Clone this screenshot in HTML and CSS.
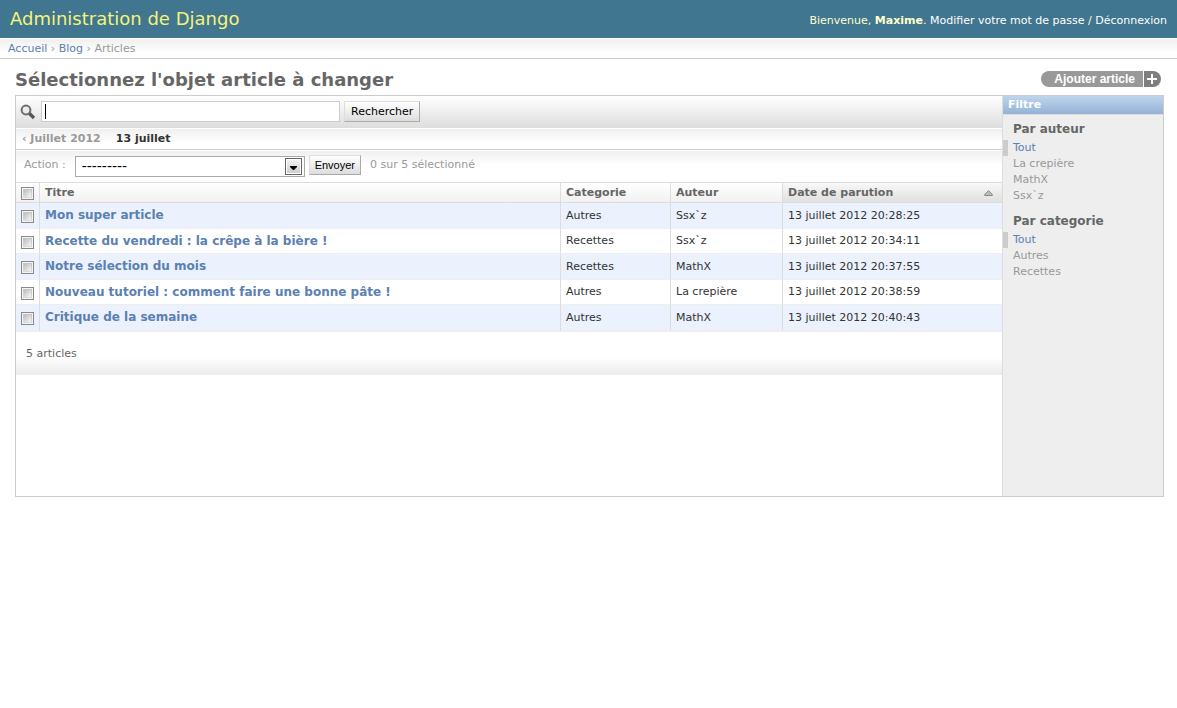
FILE: index.html
```html
<!DOCTYPE html>
<html lang="fr">
<head>
<meta charset="utf-8">
<title>Sélectionnez l'objet article à changer</title>
<link rel="stylesheet" href="styles.css">
</head>
<body>
<header class="header">
  <div class="brand">Administration de Django</div>
  <div class="user-tools">Bienvenue, <strong>Maxime</strong>. <a href="#">Modifier votre mot de passe</a> / <a href="#">Déconnexion</a></div>
</header>
<nav class="breadcrumbs"><a href="#">Accueil</a> › <a href="#">Blog</a> › Articles</nav>
<main class="content">
  <div class="title-row">
    <h1>Sélectionnez l'objet article à changer</h1>
    <a class="add-link" href="#"><span class="add-label">Ajouter article</span><span class="add-icon"><svg width="10" height="10" viewBox="0 0 10 10" aria-hidden="true"><path d="M5 0v10M0 5h10" stroke="#fff" stroke-width="2"/></svg></span></a>
  </div>
  <div class="module">
    <div class="results">
      <form class="search">
        <label for="q"><svg width="16" height="16" viewBox="0 0 16 16" role="img" aria-label="Recherche"><path d="M9 9l5 5" stroke="#555" stroke-width="3.200"/><circle cx="6" cy="6" r="4.400" fill="#ececec" stroke="#6c6c6c" stroke-width="2"/></svg></label>
        <input class="search-input" id="q" type="text">
        <button class="button" type="button">Rechercher</button>
      </form>
      <nav class="dates"><a class="back" href="#">‹ Juillet 2012</a><span class="day">13 juillet</span></nav>
      <form class="actions">
        <label for="action">Action :</label>
        <span class="select-wrap"><select id="action"><option>---------</option></select><span class="arrow"><svg width="7" height="4" viewBox="0 0 7 4" aria-hidden="true"><path d="M0 0h7v1L4 4H3L0 1z"/></svg></span></span>
        <button class="button send" type="button">Envoyer</button>
        <span class="counter">0 sur 5 sélectionné</span>
      </form>
      <table>
        <colgroup><col class="col-check"><col><col class="col-category"><col class="col-author"><col class="col-date"></colgroup>
        <thead>
          <tr><th><input type="checkbox" aria-label="Tout sélectionner"></th><th>Titre</th><th>Categorie</th><th>Auteur</th><th class="sorted"><span class="sort">Date de parution<svg width="9" height="6" viewBox="0 0 9 6" aria-hidden="true"><path d="M4.500 0.700L8.300 4.500v1H0.700v-1z" fill="#bbb" stroke="#888"/></svg></span></th></tr>
        </thead>
        <tbody>
          <tr><td><input type="checkbox" aria-label="Mon super article"></td><td><a href="#">Mon super article</a></td><td>Autres</td><td>Ssx`z</td><td>13 juillet 2012 20:28:25</td></tr>
          <tr><td><input type="checkbox" aria-label="Recette du vendredi"></td><td><a href="#">Recette du vendredi : la crêpe à la bière !</a></td><td>Recettes</td><td>Ssx`z</td><td>13 juillet 2012 20:34:11</td></tr>
          <tr><td><input type="checkbox" aria-label="Notre sélection du mois"></td><td><a href="#">Notre sélection du mois</a></td><td>Recettes</td><td>MathX</td><td>13 juillet 2012 20:37:55</td></tr>
          <tr><td><input type="checkbox" aria-label="Nouveau tutoriel"></td><td><a href="#">Nouveau tutoriel : comment faire une bonne pâte !</a></td><td>Autres</td><td>La crepière</td><td>13 juillet 2012 20:38:59</td></tr>
          <tr><td><input type="checkbox" aria-label="Critique de la semaine"></td><td><a href="#">Critique de la semaine</a></td><td>Autres</td><td>MathX</td><td>13 juillet 2012 20:40:43</td></tr>
        </tbody>
      </table>
      <p class="paginator">5 articles</p>
    </div>
    <aside class="filter">
      <h2>Filtre</h2>
      <h3>Par auteur</h3>
      <ul>
        <li class="selected"><a href="#">Tout</a></li>
        <li><a href="#">La crepière</a></li>
        <li><a href="#">MathX</a></li>
        <li><a href="#">Ssx`z</a></li>
      </ul>
      <h3>Par categorie</h3>
      <ul>
        <li class="selected"><a href="#">Tout</a></li>
        <li><a href="#">Autres</a></li>
        <li><a href="#">Recettes</a></li>
      </ul>
    </aside>
  </div>
</main>
</body>
</html>
```
FILE: styles.css
```css
* { box-sizing: border-box; }
body {
  margin: 0;
  background: #fff;
  color: #333;
  font: 11px/16px "DejaVu Sans", Verdana, sans-serif;
}
a { color: #5b80b2; text-decoration: none; }
h1, h2, h3, p, ul { margin: 0; padding: 0; }
ul { list-style: none; }
svg { display: block; }

.header {
  display: flex;
  justify-content: space-between;
  align-items: center;
  padding: 8px 10px;
  background: #417690;
  color: #ffc;
}
.brand { color: #f4f379; font-size: 18px; line-height: 22px; }
.user-tools { padding-top: 4px; }
.user-tools a { color: #fff; }

.breadcrumbs {
  padding: 2px 8px;
  border-top: 1px solid #fff;
  border-bottom: 1px solid #ccc;
  background: linear-gradient(#f0f0f0, #fff 14px);
  color: #999;
  line-height: 15px;
}

.content { padding: 9px 13px 16px 15px; }
.title-row { display: flex; justify-content: space-between; padding: 0 3px 3px 0; }
h1 { color: #666; font-size: 18px; line-height: 24px; }
.add-link {
  display: flex;
  height: 16px;
  margin-top: 3px;
  color: #fff;
  font: bold 12px/16px "Liberation Sans", Arial, sans-serif;
}
.add-label { padding: 0 8px 0 13px; border-radius: 8px 0 0 8px; background: #999; }
.add-icon {
  margin-left: 1px;
  padding: 3px 4px 3px 3px;
  border-radius: 0 8px 8px 0;
  background: #7f7f7f;
}

.module { display: flex; min-height: 402px; border: 1px solid #ccc; }
.results { flex: 1; min-width: 0; }

.search {
  display: flex;
  align-items: center;
  gap: 4px;
  padding: 5px 4px 6px;
  background: linear-gradient(#fff, #ddd);
}
.search label { width: 17px; }
/* The one-pixel background marks the insertion point of the empty field. */
.search-input {
  width: 299px;
  height: 21px;
  padding: 0 3px;
  border: 1px solid #ccc;
  outline: 0;
  background: linear-gradient(#000, #000) 3px center / 1px 15px no-repeat #fff;
  color: #000;
  font: inherit;
}
.button {
  height: 21px;
  padding: 0 6px;
  border: 1px solid #aaa;
  border-color: #ddd #aaa #aaa #ddd;
  background: linear-gradient(#fff, #ddd);
  color: #000;
  font: 11px/19px "DejaVu Sans", Verdana, sans-serif;
}

.dates {
  display: flex;
  gap: 15px;
  padding: 2px 6px;
  border-top: 1px solid #fff;
  border-bottom: 1px solid #ccc;
  background: linear-gradient(#f0f0f0, #fff 14px);
  font-weight: bold;
}
.back { color: #999; }
.day { color: #333; }

.actions {
  display: flex;
  align-items: flex-start;
  padding: 4px 8px 5px;
  border-top: 1px solid #fff;
  border-bottom: 1px solid #ddd;
  background: linear-gradient(#f0f0f0, #fff 14px);
  color: #999;
  line-height: 20px;
}
.select-wrap { position: relative; margin: 1px 4px 0 9px; }
select {
  display: block;
  width: 230px;
  height: 21px;
  padding: 0 6px;
  border: 1px solid #aaa;
  border-radius: 0;
  appearance: none;
  background: #fff;
  color: #000;
  font: 14px/19px "DejaVu Sans", Verdana, sans-serif;
}
.arrow {
  position: absolute;
  top: 2px;
  right: 3px;
  display: grid;
  place-items: center;
  width: 17px;
  height: 17px;
  padding-top: 3px;
  border: 1px solid #666;
  box-shadow: inset 0 0 0 1px #fff;
  background: linear-gradient(#f2f2f2, #ccc);
  pointer-events: none;
}
.send { height: 20px; padding: 0 5px; font: 11px/18px "Liberation Sans", Arial, sans-serif; }
.counter { margin-left: 9px; }

table { width: 100%; border-collapse: separate; border-spacing: 0; table-layout: fixed; }
.col-check { width: 24px; }
.col-category { width: 110px; }
.col-author { width: 112px; }
.col-date { width: 219px; }
th, td { padding: 0 5px; border-right: 1px solid #ddd; text-align: left; vertical-align: middle; }
th:last-child, td:last-child { border-right: 0; }
th {
  height: 20px;
  padding-top: 1px;
  border-bottom: 1px solid #ddd;
  background: linear-gradient(#fff, #f1f1f1);
  color: #666;
  line-height: 18px;
}
.sorted { background: linear-gradient(#f8f8f8, #e0e0e0); }
.sort { display: flex; justify-content: space-between; align-items: center; padding-right: 4px; }
td { height: 26px; border-bottom: 1px solid #eee; }
tr:nth-child(even) td { height: 25px; }
tbody tr:nth-child(odd) { background: #ebf1fd; }
td a { font-size: 12px; font-weight: bold; }
input[type="checkbox"] {
  display: block;
  width: 13px;
  height: 13px;
  margin: 0;
  padding: 1px;
  border: 1px solid #8a8a8a;
  appearance: none;
  background:
    linear-gradient(135deg, #bcbcc4, #f6f6f6) 3px 3px / 7px 7px no-repeat padding-box,
    linear-gradient(#c4c4c4, #ddd) content-box,
    #f4f4f4;
  background-position: 2px 2px, 0 0, 0 0;
}
td input[type="checkbox"] { margin-top: 2px; }

.paginator {
  padding: 14px 10px 12px;
  border-top: 1px solid #eee;
  border-bottom: 1px solid #eee;
  background: linear-gradient(#fff 60%, #ececec);
  color: #666;
}

.filter { width: 161px; border-left: 1px solid #ddd; background: #eee; }
.filter h2 {
  padding: 1px 5px;
  border-bottom: 1px solid #ddd;
  background: linear-gradient(#bfd4ec, #94b3d5);
  color: #fff;
  font-size: 11px;
  line-height: 16px;
}
.filter h3 { margin: 6px 0 3px; padding: 0 10px; color: #666; font-size: 12px; line-height: 16px; }
.filter ul { margin-bottom: 9px; }
.filter li { padding-left: 10px; }
.filter li a { color: #999; }
.filter .selected { padding-left: 5px; border-left: 5px solid #ccc; }
.filter .selected a { color: #5b80b2; }
```
